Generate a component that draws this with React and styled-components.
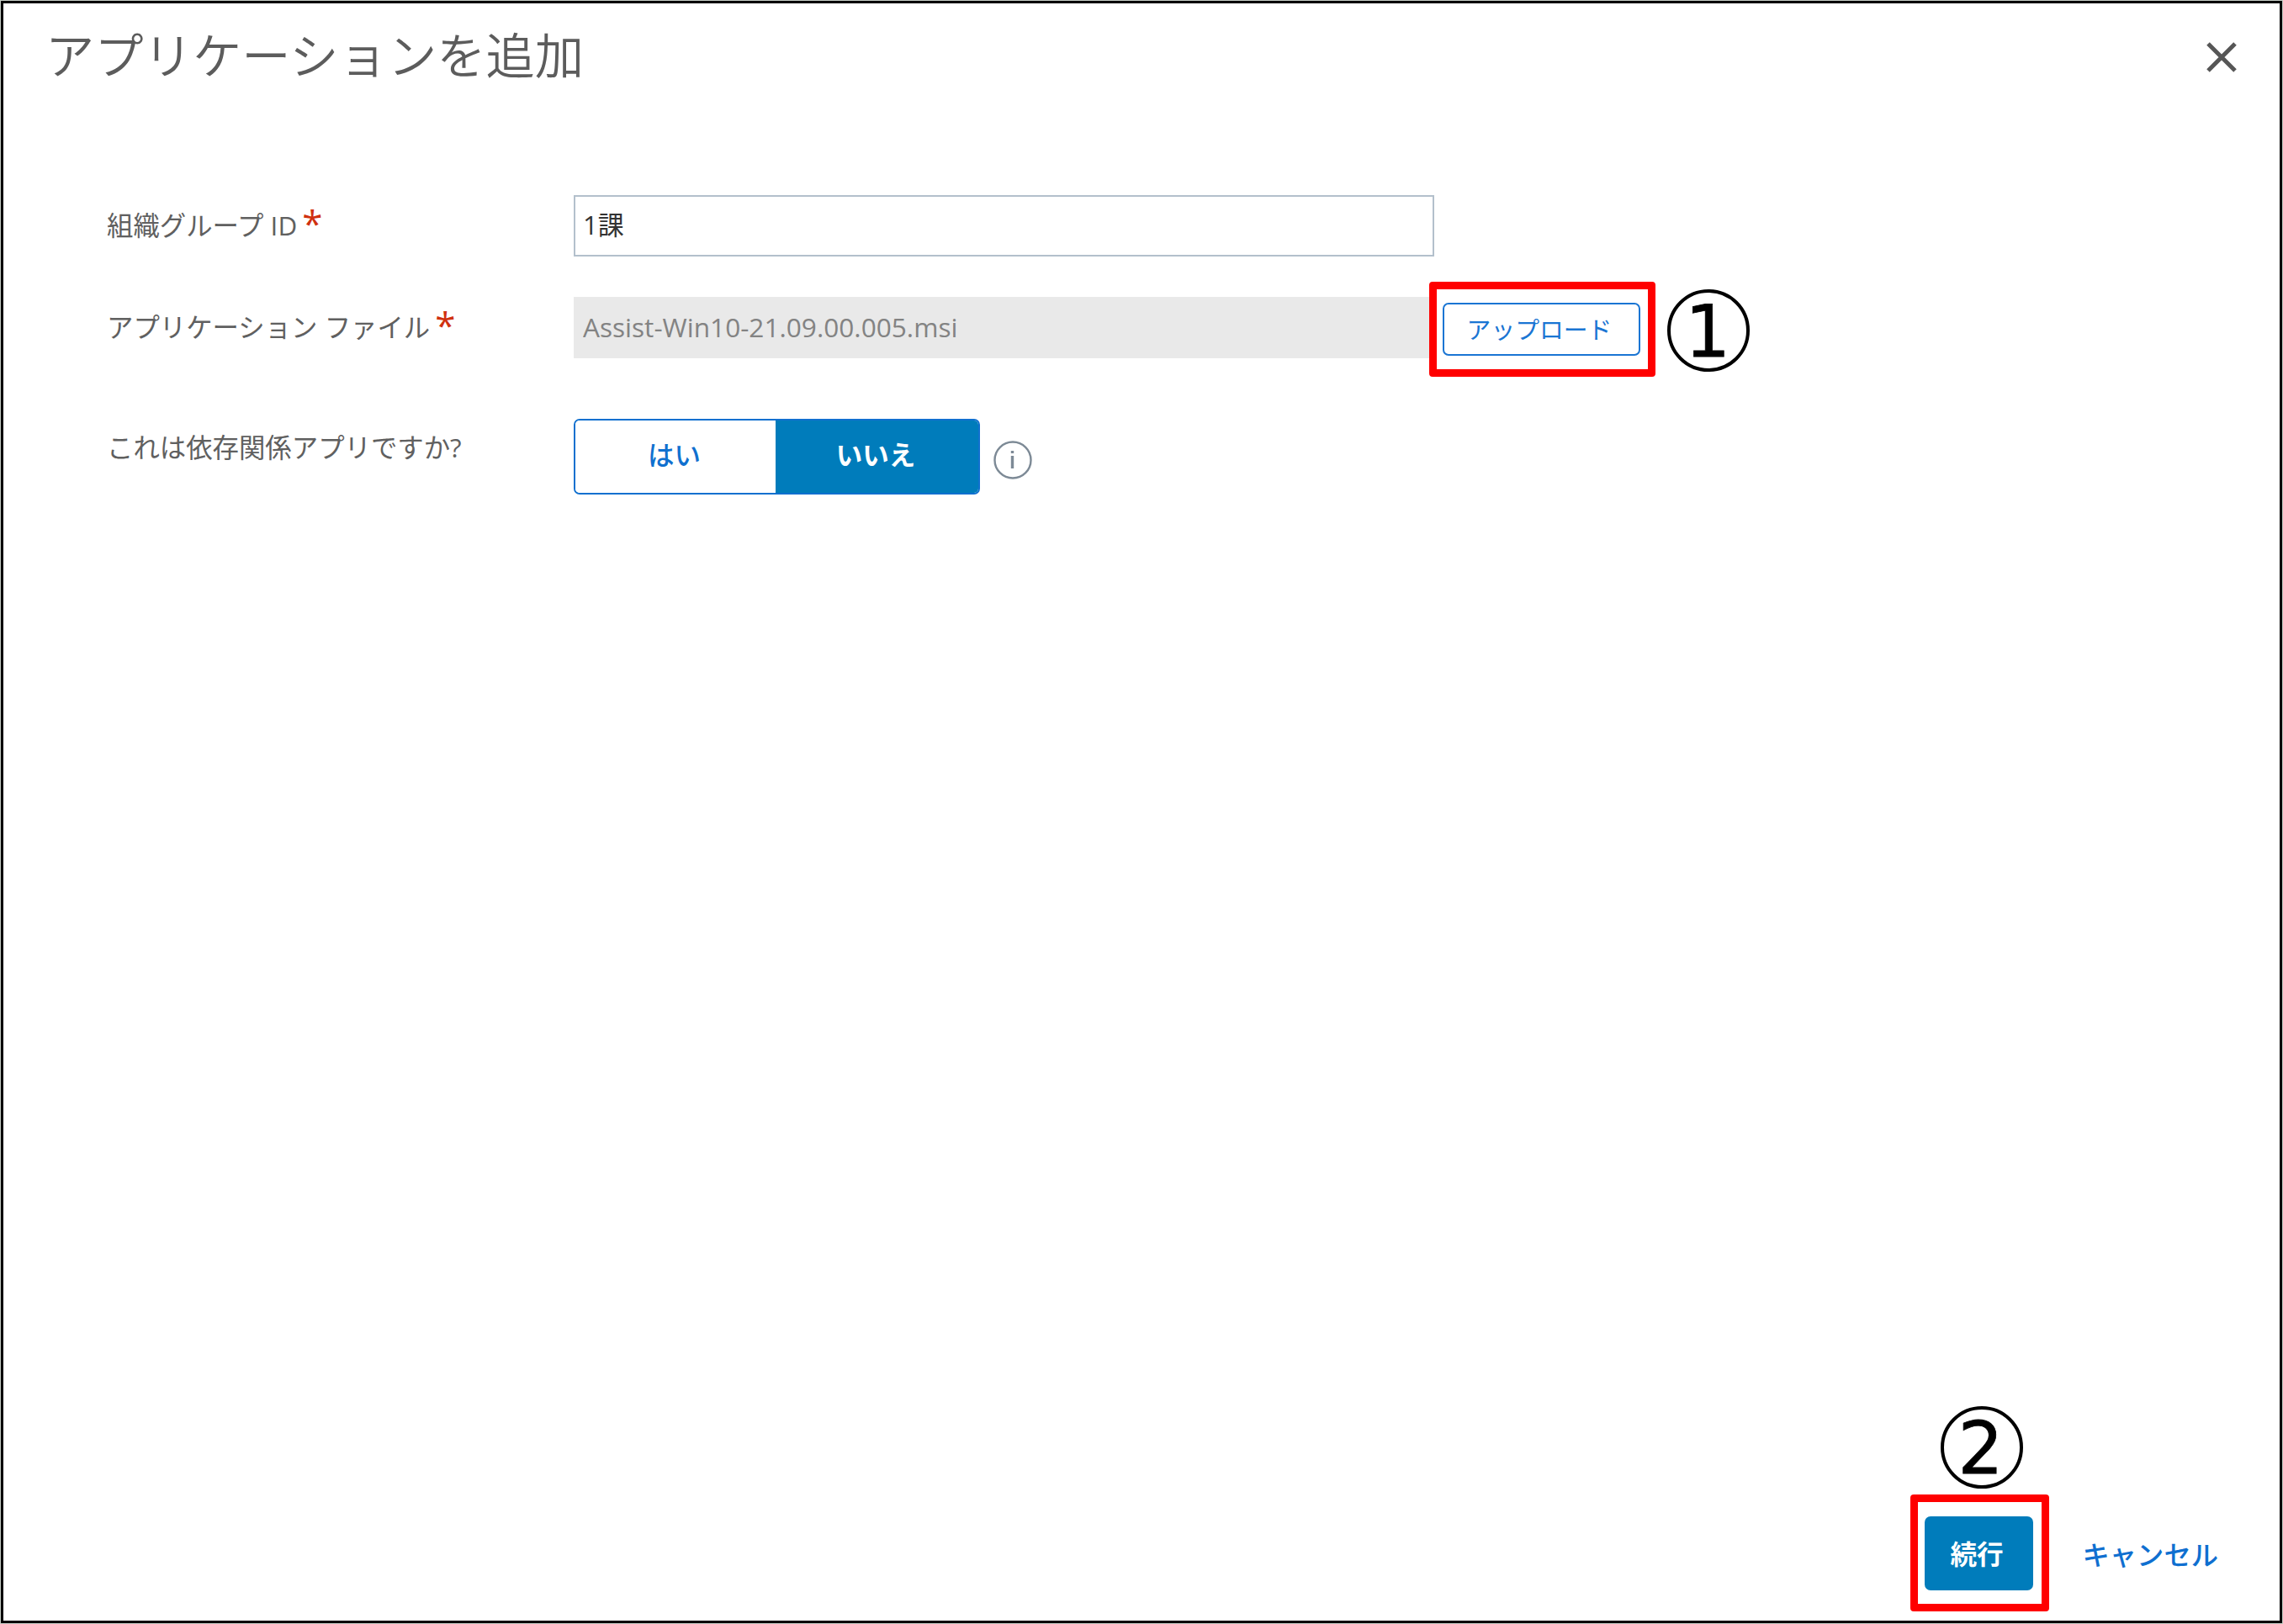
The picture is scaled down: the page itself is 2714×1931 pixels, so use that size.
import React, { useState } from "react";
import styled, { createGlobalStyle } from "styled-components";

const GlobalStyle = createGlobalStyle`
    * {
        box-sizing: border-box;
    }

    body {
        margin: 0;
        background: #fff;
        font-family: "Open Sans", "Noto Sans CJK JP", sans-serif;
    }

    button, input {
        margin: 0;
        font-family: inherit;
    }
`;

const Frame = styled.div`
    width: 2714px;
    height: 1931px;
    padding: 1px;
    background: #c6cdc6;
`;

const Dialog = styled.div`
    display: flex;
    flex-direction: column;
    height: 100%;
    border: 3px solid #000;
    background: #fff;
`;

const Header = styled.header`
    display: flex;
    align-items: center;
    justify-content: space-between;
    height: 128px;
    padding: 0 51px 0 50px;
`;

const Title = styled.h1`
    margin: 0;
    padding-bottom: 10px;
    font-family: "Noto Sans CJK JP", sans-serif;
    font-size: 58.3px;
    font-weight: 350;
    line-height: 80px;
    color: #5c5c5c;
`;

const CloseButton = styled.button`
    display: flex;
    padding: 0;
    border: 0;
    background: none;
    color: #565656;
`;

const Form = styled.main`
    flex: 1;
    padding: 100px 0 0 123px;
`;

const Row = styled.div`
    display: flex;
    align-items: flex-start;
    height: ${(props) => props.$height}px;
`;

const Label = styled.label`
    display: flex;
    width: 555px;
    padding-top: ${(props) => props.$top || 12}px;
    font-size: 31.4px;
    font-weight: 400;
    line-height: 48px;
    color: #606060;
    white-space: pre;
`;

const Required = styled.span`
    margin: -3px 0 0 6px;
    font-size: 44px;
    font-weight: 500;
    color: #d0310f;
`;

const TextField = styled.input`
    width: 1023px;
    height: 73px;
    padding: 0 9px 6px;
    border: 2px solid #b3c0cc;
    outline: none;
    font-size: 31px;
    color: #333;

    &:disabled {
        width: 1017px;
        padding-bottom: 2px;
        border-color: #e9e9e9;
        background: #e9e9e9;
        font-size: 31.6px;
        color: #838383;
    }
`;

const Highlight = styled.div`
    display: flex;
    align-items: center;
    justify-content: center;
    width: ${(props) => props.$width}px;
    height: ${(props) => props.$height}px;
    border: 9px solid #f00;
    border-radius: 4px;
`;

const UploadHighlight = styled(Highlight)`
    margin: -18px 14px 0 0;
    padding-right: 3px;
`;

const UploadButton = styled.button`
    width: 235px;
    height: 63px;
    padding: 0 4px 2px 0;
    border: 2px solid #1a75d3;
    border-radius: 7px;
    background: #fff;
    font-size: 28.8px;
    color: #1a75d3;
`;

const StepNumber = styled.div`
    display: flex;
    align-items: center;
    justify-content: center;
    width: 98px;
    height: 98px;
    padding: 3px 2px 0 0;
    border: 4px solid #000;
    border-radius: 50%;
    font-family: "DejaVu Sans", sans-serif;
    font-size: 85px;
    line-height: 90px;
    color: #000;
    -webkit-text-stroke: 0.8px #000;
`;

const UploadStep = styled(StepNumber)`
    margin-top: -9px;
`;

const Toggle = styled.div`
    display: flex;
    width: 483px;
    height: 90px;
    border: 2px solid #1070cf;
    border-radius: 7px;
    overflow: hidden;
`;

const ToggleOption = styled.button`
    flex: ${(props) => (props.$active ? "1" : "0 0 238px")};
    padding: 0 3px 8px 0;
    border: 0;
    background: ${(props) => (props.$active ? "#007cbb" : "#fff")};
    font-size: 31.5px;
    font-weight: ${(props) => (props.$active ? 700 : 500)};
    color: ${(props) => (props.$active ? "#fff" : "#1070cf")};
`;

const InfoIcon = styled.svg`
    margin: 26px 0 0 16px;
`;

const Footer = styled.footer`
    display: flex;
    align-items: flex-end;
    justify-content: flex-end;
    padding: 0 73px 11px 0;
`;

const ContinueStep = styled.div`
    display: flex;
    flex-direction: column;
    align-items: center;
    gap: 7px;
`;

const ContinueNumber = styled(StepNumber)`
    margin-left: 5px;
`;

const ContinueHighlight = styled(Highlight)`
    padding-right: 2px;
`;

const ContinueButton = styled.button`
    width: 129px;
    height: 88px;
    padding: 0 4px 2px 0;
    border: 0;
    border-radius: 7px;
    background: #007cbb;
    font-size: 31.6px;
    font-weight: 700;
    color: #fff;
`;

const CancelButton = styled.button`
    height: 88px;
    margin: 0 0 25px 40px;
    padding: 0;
    border: 0;
    background: none;
    font-size: 32.3px;
    font-weight: 500;
    color: #0f6fd0;
`;

export default function App() {
    const [isDependency, setIsDependency] = useState(false);

    return (
        <Frame>
            <GlobalStyle />
            <Dialog>
                <Header>
                    <Title>アプリケーションを追加</Title>
                    <CloseButton aria-label="閉じる">
                        <svg width="36" height="36" viewBox="0 0 36 36" fill="none" stroke="currentColor" strokeWidth="5">
                            <path d="M2 2l32 32M34 2L2 34" />
                        </svg>
                    </CloseButton>
                </Header>
                <Form>
                    <Row $height={121}>
                        <Label>
                            組織グループ ID
                            <Required>*</Required>
                        </Label>
                        <TextField defaultValue="1課" />
                    </Row>
                    <Row $height={145}>
                        <Label>
                            アプリケーション ファイル
                            <Required>*</Required>
                        </Label>
                        <TextField disabled defaultValue="Assist-Win10-21.09.00.005.msi" />
                        <UploadHighlight $width={269} $height={113}>
                            <UploadButton>アップロード</UploadButton>
                        </UploadHighlight>
                        <UploadStep>1</UploadStep>
                    </Row>
                    <Row $height={90}>
                        <Label $top={10}>これは依存関係アプリですか?</Label>
                        <Toggle>
                            <ToggleOption $active={isDependency} onClick={() => setIsDependency(true)}>
                                はい
                            </ToggleOption>
                            <ToggleOption $active={!isDependency} onClick={() => setIsDependency(false)}>
                                いいえ
                            </ToggleOption>
                        </Toggle>
                        <InfoIcon width="46" height="46" viewBox="0 0 46 46" fill="none" stroke="#7d8a96">
                            <circle cx="23" cy="23" r="21.5" strokeWidth="2.4" />
                            <path d="M22.5 18v15M22.5 12v3" strokeWidth="3.4" />
                        </InfoIcon>
                    </Row>
                </Form>
                <Footer>
                    <ContinueStep>
                        <ContinueNumber>2</ContinueNumber>
                        <ContinueHighlight $width={165} $height={139}>
                            <ContinueButton>続行</ContinueButton>
                        </ContinueHighlight>
                    </ContinueStep>
                    <CancelButton>キャンセル</CancelButton>
                </Footer>
            </Dialog>
        </Frame>
    );
}
